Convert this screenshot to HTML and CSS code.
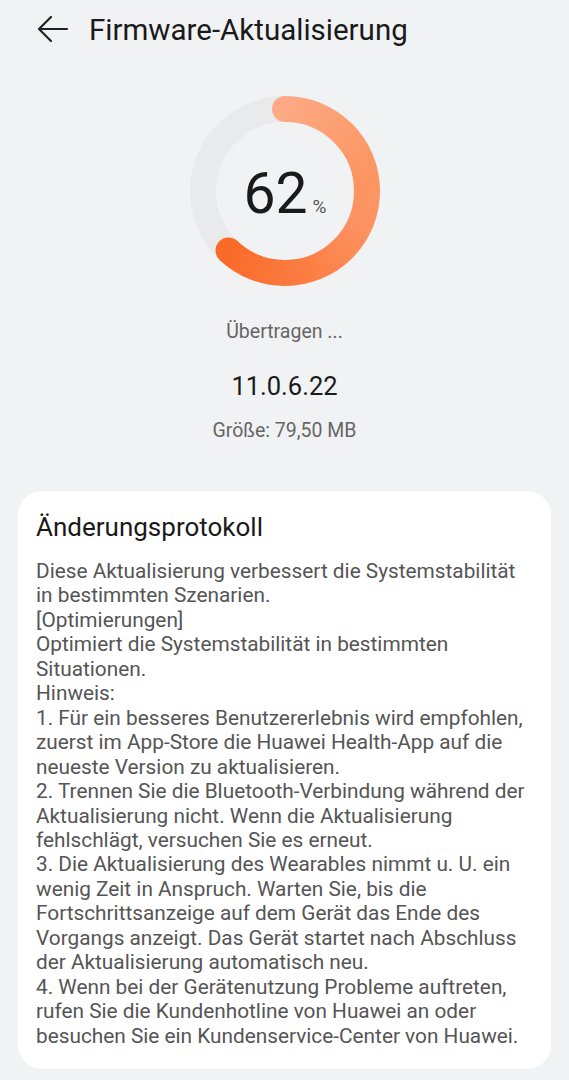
FILE: index.html
```html
<!DOCTYPE html>
<html lang="de">
<head>
<meta charset="utf-8">
<link rel="stylesheet" href="styles.css">
</head>
<body>
<div class="page">
  <header class="header">
    <svg class="back" width="32" height="28" viewBox="0 0 32 28">
      <path d="M30 14H3M14 2L2 14l12 12" fill="none" stroke="#222" stroke-width="2.2" stroke-linecap="round" stroke-linejoin="round"/>
    </svg>
    <h1 class="title">Firmware-Aktualisierung</h1>
  </header>

  <section class="progress">
    <div class="ring">
      <svg width="192" height="192" viewBox="0 0 192 192">
        <defs>
          <mask id="arc" maskUnits="userSpaceOnUse" x="0" y="0" width="192" height="192">
            <circle cx="96" cy="96" r="82" fill="none" stroke="#fff" stroke-width="26" stroke-linecap="round"
              stroke-dasharray="319.4 515.2" transform="rotate(-90 96 96)"/>
          </mask>
        </defs>
        <circle cx="96" cy="96" r="82" fill="none" stroke="#e9eaec" stroke-width="26"/>
        <foreignObject x="0" y="0" width="192" height="192" mask="url(#arc)">
          <div class="conic"></div>
        </foreignObject>
      </svg>
      <div class="value"><span class="num">62</span><span class="pct">%</span></div>
    </div>
    <div class="status">Übertragen ...</div>
    <div class="version">11.0.6.22</div>
    <div class="size">Größe: 79,50 MB</div>
  </section>

  <section class="card">
    <h2 class="card-title">Änderungsprotokoll</h2>
    <p class="notes">Diese Aktualisierung verbessert die Systemstabilität<br>in bestimmten Szenarien.<br>[Optimierungen]<br>Optimiert die Systemstabilität in bestimmten<br>Situationen.<br>Hinweis:<br>1. Für ein besseres Benutzererlebnis wird empfohlen,<br>zuerst im App-Store die Huawei Health-App auf die<br>neueste Version zu aktualisieren.<br>2. Trennen Sie die Bluetooth-Verbindung während der<br>Aktualisierung nicht. Wenn die Aktualisierung<br>fehlschlägt, versuchen Sie es erneut.<br>3. Die Aktualisierung des Wearables nimmt u. U. ein<br>wenig Zeit in Anspruch. Warten Sie, bis die<br>Fortschrittsanzeige auf dem Gerät das Ende des<br>Vorgangs anzeigt. Das Gerät startet nach Abschluss<br>der Aktualisierung automatisch neu.<br>4. Wenn bei der Gerätenutzung Probleme auftreten,<br>rufen Sie die Kundenhotline von Huawei an oder<br>besuchen Sie ein Kundenservice-Center von Huawei.</p>
  </section>
</div>
</body>
</html>
```
FILE: styles.css
```css
html, body {
  margin: 0;
  padding: 0;
  background: #f1f2f4;
}
body {
  font-family: Roboto, "Noto Sans", sans-serif;
  color: #1a1a1a;
  width: 569px;
  height: 1080px;
  overflow: hidden;
}
.page {
  display: flex;
  flex-direction: column;
}
.header {
  display: flex;
  align-items: center;
  height: 60px;
  padding-left: 37px;
}
.back {
  flex: none;
  margin-top: -2px;
}
.title {
  margin: 0 0 0 20px;
  font-size: 29.5px;
  font-weight: 400;
  color: #1a1a1a;
}
.progress {
  display: flex;
  flex-direction: column;
  align-items: center;
  padding-top: 35px;
}
.ring {
  position: relative;
  width: 192px;
  height: 192px;
  margin-left: 1px;
}
.ring svg {
  display: block;
}
.conic {
  width: 192px;
  height: 192px;
  background: conic-gradient(from -25deg at 50% 50%,
    #fdb08d 0deg, #fda882 30deg, #fc9663 100deg, #fd9262 140deg,
    #fb7c40 195deg, #fa6a29 248deg, #fa6a2a 300deg, #fdb08d 360deg);
}
.value {
  position: absolute;
  left: 0;
  right: 0;
  top: 70px;
  display: flex;
  justify-content: center;
  align-items: baseline;
}
.num {
  font-size: 57px;
  line-height: 1;
  color: #1a1a1a;
}
.pct {
  font-size: 19px;
  color: #555;
  margin-left: 5px;
}
.status {
  margin-top: 33px;
  font-size: 19.5px;
  color: #666;
}
.version {
  margin-top: 28px;
  font-size: 25.5px;
  color: #1a1a1a;
}
.size {
  margin-top: 18px;
  font-size: 19.5px;
  color: #666;
}
.card {
  margin: 49px 18px 0;
  background: #fff;
  border-radius: 24px;
  padding: 18px 18px 21px;
}
.card-title {
  margin: 0;
  font-size: 26px;
  font-weight: 400;
  color: #1a1a1a;
  line-height: 36px;
}
.notes {
  margin: 14px 0 0;
  font-size: 20.8px;
  line-height: 24.45px;
  color: #555;
}
```
